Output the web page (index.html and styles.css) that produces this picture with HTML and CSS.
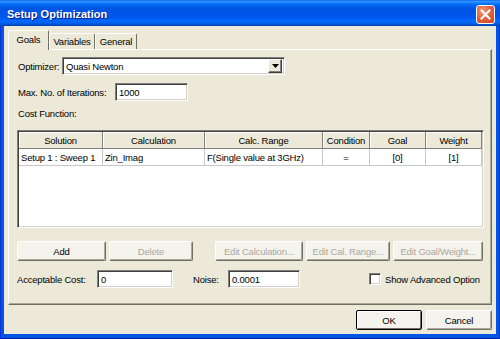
FILE: index.html
```html
<!DOCTYPE html>
<html>
<head>
<meta charset="utf-8">
<link rel="stylesheet" href="styles.css">
</head>
<body>
<div class="window">
  <div class="titlebar">
    <span class="title">Setup Optimization</span>
    <div class="close">
      <svg width="11" height="11" viewBox="0 0 11 11"><path d="M1.5 1.5 L9.5 9.5 M9.5 1.5 L1.5 9.5" stroke="#fff" stroke-width="2" stroke-linecap="square"/></svg>
    </div>
  </div>
  <div class="client">
    <div class="tabs">
      <div class="tab active t-goals">Goals</div>
      <div class="tab t-vars">Variables</div>
      <div class="tab t-gen">General</div>
    </div>
    <div class="panel">
      <div class="row r-opt">
        <span class="lbl l-opt">Optimizer:</span>
        <div class="combo">
          <span class="combo-text">Quasi Newton</span>
          <span class="combo-btn"><svg width="7" height="4" viewBox="0 0 7 4"><path d="M0 0 H7 L3.5 4 Z" fill="#000"/></svg></span>
        </div>
      </div>
      <div class="row r-iter">
        <span class="lbl l-iter">Max. No. of Iterations:</span>
        <div class="field f-iter">1000</div>
      </div>
      <div class="cost-label">Cost Function:</div>
      <div class="grid">
        <div class="hd">Solution</div>
        <div class="hd">Calculation</div>
        <div class="hd">Calc. Range</div>
        <div class="hd">Condition</div>
        <div class="hd">Goal</div>
        <div class="hd">Weight</div>
        <div class="cell">Setup 1 : Sweep 1</div>
        <div class="cell">Zin_Imag</div>
        <div class="cell">F(Single value at 3GHz)</div>
        <div class="cell c">=</div>
        <div class="cell c">[0]</div>
        <div class="cell c">[1]</div>
      </div>
      <div class="btnrow">
        <div class="btn b-add">Add</div>
        <div class="btn dis b-del">Delete</div>
        <div class="btn dis b-calc">Edit Calculation...</div>
        <div class="btn dis b-range">Edit Cal. Range...</div>
        <div class="btn dis b-goal">Edit Goal/Weight...</div>
      </div>
      <div class="row r-bottom">
        <span class="lbl l-acc">Acceptable Cost:</span>
        <div class="field f-acc">0</div>
        <span class="lbl l-noise">Noise:</span>
        <div class="field f-noise">0.0001</div>
        <span class="check"></span>
        <span class="lbl l-show">Show Advanced Option</span>
      </div>
    </div>
    <div class="footer">
      <div class="btn def b-ok">OK</div>
      <div class="btn b-cancel">Cancel</div>
    </div>
  </div>
</div>
</body>
</html>
```

FILE: styles.css
```css
* { box-sizing: border-box; }
html, body { margin: 0; padding: 0; }
body {
  width: 500px;
  height: 339px;
  overflow: hidden;
  font-family: "Liberation Sans", Arial, sans-serif;
  font-size: 9.5px;
  letter-spacing: -0.2px;
  color: #000;
}
.window {
  width: 500px;
  height: 339px;
  background: #0055E5;
  box-shadow: inset 1px 0 #0831D9, inset -1px 0 #0831D9, inset 0 -1px #001EA0;
  display: flex;
  flex-direction: column;
}
.titlebar {
  height: 26px;
  display: flex;
  align-items: center;
  padding: 2px 5px 0 7px;
  background: linear-gradient(to bottom, #0058EE 0%, #3593FF 4%, #288EFF 8%, #127DFF 12%, #036FFC 16%, #0262EE 22%, #0057E5 30%, #0054E3 40%, #0055EB 60%, #005BF5 70%, #026AFE 80%, #0062EF 88%, #0052D6 94%, #0040AB 100%);
}
.title {
  flex: 1;
  color: #fff;
  font-weight: bold;
  font-size: 11px;
  letter-spacing: 0;
  text-shadow: 1px 1px #0A1883;
}
.close {
  width: 19px;
  height: 19px;
  border: 1px solid #fff;
  border-radius: 3px;
  background: radial-gradient(circle at 35% 30%, #F09A76 0%, #E26440 45%, #C9431D 100%);
  display: flex;
  align-items: center;
  justify-content: center;
}
.client {
  flex: 1;
  margin: 0 4px 5px;
  background: #ECE9D8;
  padding: 4px 4px 4px;
  display: flex;
  flex-direction: column;
}
.tabs {
  display: flex;
  align-items: flex-end;
  height: 19px;
  position: relative;
  z-index: 1;
}
.tab {
  height: 16px;
  display: flex;
  align-items: center;
  justify-content: center;
  border-top: 1px solid #fff;
  border-left: 1px solid #fff;
  border-right: 1px solid #716F64;
  border-radius: 2px 2px 0 0;
  background: #ECE9D8;
}
.tab.active {
  height: 20px;
  margin-bottom: -1px;
  padding-bottom: 2px;
}
.t-goals { width: 41px; }
.t-vars { width: 46px; }
.t-gen { width: 42px; }
.panel {
  height: 256px;
  border-top: 1px solid #fff;
  border-left: 1px solid #fff;
  border-right: 1px solid #716F64;
  border-bottom: 1px solid #716F64;
  box-shadow: inset -1px -1px #ACA899;
  padding: 7px 8px 0 8px;
  display: flex;
  flex-direction: column;
}
.row {
  display: flex;
  align-items: center;
}
.lbl { white-space: nowrap; }
.r-opt { height: 18px; }
.l-opt { width: 44px; margin-left: 1px; }
.combo {
  width: 223px;
  height: 18px;
  background: #fff;
  border-top: 1px solid #808080;
  border-left: 1px solid #808080;
  border-right: 1px solid #fff;
  border-bottom: 1px solid #fff;
  box-shadow: inset 1px 1px #404040, inset -1px -1px #D4D0C8;
  display: flex;
  align-items: center;
  padding: 2px 2px 2px 3px;
}
.combo-text { flex: 1; }
.combo-btn {
  width: 14px;
  height: 14px;
  background: #ECE9D8;
  border-top: 1px solid #fff;
  border-left: 1px solid #fff;
  border-right: 1px solid #404040;
  border-bottom: 1px solid #404040;
  box-shadow: inset -1px -1px #808080;
  display: flex;
  align-items: center;
  justify-content: center;
}
.field {
  height: 18px;
  background: #fff;
  border-top: 1px solid #808080;
  border-left: 1px solid #808080;
  border-right: 1px solid #fff;
  border-bottom: 1px solid #fff;
  box-shadow: inset 1px 1px #404040, inset -1px -1px #D4D0C8;
  display: flex;
  align-items: center;
  padding-left: 3px;
}
.r-iter { margin-top: 8px; height: 18px; }
.l-iter { width: 97px; margin-left: 1px; }
.f-iter { width: 73px; }
.cost-label {
  margin-top: 7px;
  height: 12px;
  line-height: 12px;
  margin-left: 1px;
}
.grid {
  margin-top: 10px;
  width: 467px;
  height: 98px;
  background: #fff;
  border-top: 1px solid #808080;
  border-left: 1px solid #808080;
  border-right: 1px solid #fff;
  border-bottom: 1px solid #fff;
  box-shadow: inset 1px 1px #404040, inset -1px -1px #D4D0C8;
  padding: 1px;
  display: grid;
  grid-template-columns: 84px 102px 118px 47px 56px 56px;
  grid-template-rows: 17px 17px;
  align-content: start;
}
.hd {
  background: #ECE9D8;
  border-right: 1px solid #808080;
  border-bottom: 1px solid #808080;
  box-shadow: inset 1px 1px #fff;
  display: flex;
  align-items: center;
  justify-content: center;
}
.cell {
  border-right: 1px solid #C8C8C8;
  border-bottom: 1px solid #C8C8C8;
  display: flex;
  align-items: center;
  padding-left: 2px;
  white-space: nowrap;
  overflow: hidden;
}
.cell.c { justify-content: center; padding-left: 0; }
.btnrow {
  margin-top: 13px;
  display: flex;
  height: 20px;
}
.btn {
  height: 20px;
  display: flex;
  align-items: center;
  justify-content: center;
  background: #F4F3EE;
  border-top: 1px solid #fff;
  border-left: 1px solid #fff;
  border-right: 1px solid #716F64;
  border-bottom: 1px solid #716F64;
  box-shadow: inset -1px -1px #ACA899;
  border-radius: 2px;
  white-space: nowrap;
}
.btn.dis { color: #ACA899; }
.b-add { width: 89px; }
.b-del { width: 84px; margin-left: 3px; }
.b-calc { width: 88px; margin-left: 22px; }
.b-range { width: 84px; margin-left: 3px; }
.b-goal { width: 90px; margin-left: 3px; }
.r-bottom { margin-top: 9px; height: 18px; }
.l-acc { width: 80px; }
.f-acc { width: 76px; height: 18px; }
.l-noise { width: 35px; margin-left: 20px; }
.f-noise { width: 72px; }
.check {
  width: 12px;
  height: 12px;
  margin-left: 69px;
  background: #fff;
  border-top: 1px solid #808080;
  border-left: 1px solid #808080;
  border-right: 1px solid #fff;
  border-bottom: 1px solid #fff;
  box-shadow: inset 1px 1px #404040, inset -1px -1px #D4D0C8;
}
.l-show { margin-left: 4px; }
.footer {
  margin-top: 5px;
  height: 20px;
  display: flex;
  justify-content: flex-end;
}
.b-ok { width: 66px; }
.b-cancel { width: 66px; margin-left: 4px; }
.btn.def {
  border: 1px solid #000;
  box-shadow: inset 1px 1px #fff, inset -1px -1px #716F64;
}
```
